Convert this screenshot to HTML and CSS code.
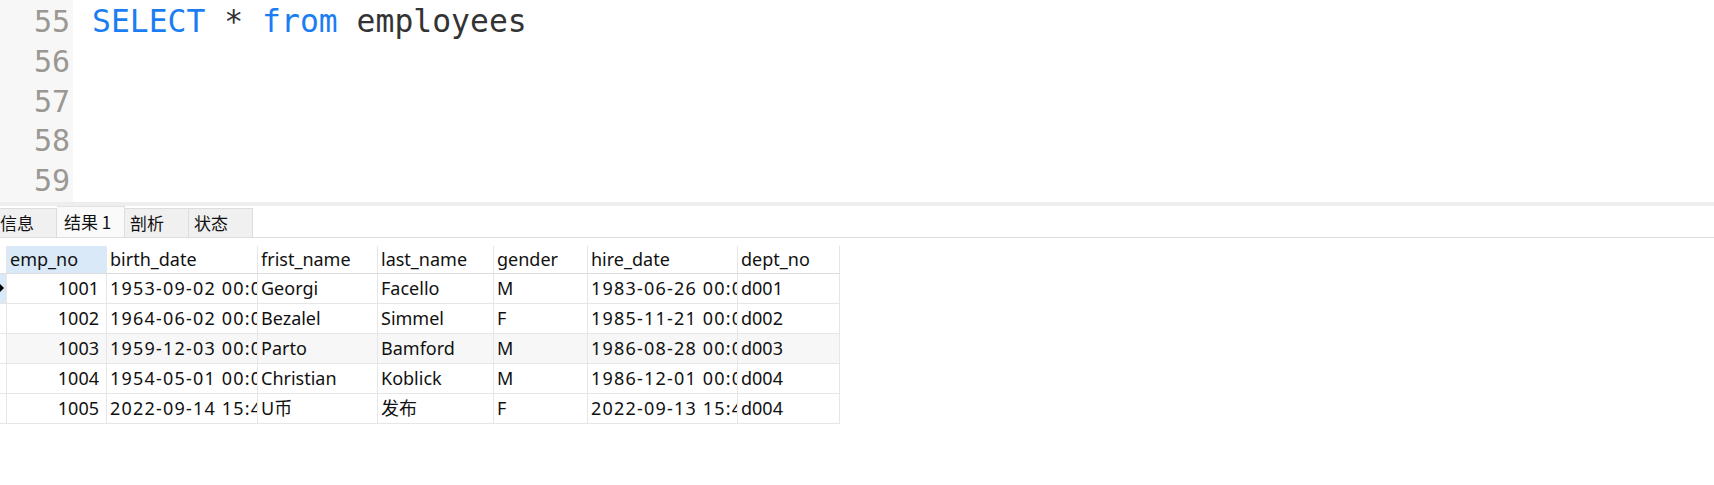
FILE: index.html
```html
<!DOCTYPE html>
<html lang="zh-CN">
<head>
<meta charset="utf-8">
<title>Query</title>
<link rel="stylesheet" href="styles.css">
</head>
<body>
<div class="editor">
  <div class="gutter">
    <div class="ln">55</div>
    <div class="ln">56</div>
    <div class="ln">57</div>
    <div class="ln">58</div>
    <div class="ln">59</div>
  </div>
  <div class="code">
    <div class="line"><span class="kw">SELECT</span> * <span class="kw">from</span> employees</div>
    <div class="line"></div>
    <div class="line"></div>
    <div class="line"></div>
    <div class="line"></div>
  </div>
</div>
<div class="splitter"></div>
<div class="tabbar">
  <div class="tab tab-first">信息</div>
  <div class="tab tab-active">结果 1</div>
  <div class="tab">剖析</div>
  <div class="tab">状态</div>
</div>
<div class="grid">
  <div class="row head">
    <div class="cell ind"></div>
    <div class="cell sel">emp_no</div>
    <div class="cell">birth_date</div>
    <div class="cell">frist_name</div>
    <div class="cell">last_name</div>
    <div class="cell">gender</div>
    <div class="cell">hire_date</div>
    <div class="cell">dept_no</div>
  </div>
  <div class="row">
    <div class="cell ind ind-cur"><span class="arrow"></span></div>
    <div class="cell num">1001</div>
    <div class="cell dt">1953-09-02 00:00:00</div>
    <div class="cell">Georgi</div>
    <div class="cell">Facello</div>
    <div class="cell">M</div>
    <div class="cell dt">1983-06-26 00:00:00</div>
    <div class="cell">d001</div>
  </div>
  <div class="row">
    <div class="cell ind"></div>
    <div class="cell num">1002</div>
    <div class="cell dt">1964-06-02 00:00:00</div>
    <div class="cell">Bezalel</div>
    <div class="cell">Simmel</div>
    <div class="cell">F</div>
    <div class="cell dt">1985-11-21 00:00:00</div>
    <div class="cell">d002</div>
  </div>
  <div class="row alt">
    <div class="cell ind"></div>
    <div class="cell num">1003</div>
    <div class="cell dt">1959-12-03 00:00:00</div>
    <div class="cell">Parto</div>
    <div class="cell">Bamford</div>
    <div class="cell">M</div>
    <div class="cell dt">1986-08-28 00:00:00</div>
    <div class="cell">d003</div>
  </div>
  <div class="row">
    <div class="cell ind"></div>
    <div class="cell num">1004</div>
    <div class="cell dt">1954-05-01 00:00:00</div>
    <div class="cell">Christian</div>
    <div class="cell">Koblick</div>
    <div class="cell">M</div>
    <div class="cell dt">1986-12-01 00:00:00</div>
    <div class="cell">d004</div>
  </div>
  <div class="row">
    <div class="cell ind"></div>
    <div class="cell num">1005</div>
    <div class="cell dt">2022-09-14 15:40:00</div>
    <div class="cell">U币</div>
    <div class="cell">发布</div>
    <div class="cell">F</div>
    <div class="cell dt">2022-09-13 15:40:00</div>
    <div class="cell">d004</div>
  </div>
</div>
</body>
</html>
```
FILE: styles.css
```css
html, body {
  margin: 0;
  padding: 0;
  background: #ffffff;
}
body {
  width: 1714px;
  height: 485px;
  overflow: hidden;
  font-family: "Noto Sans", "Noto Sans CJK SC", sans-serif;
}
.editor {
  display: flex;
  height: 202px;
  overflow: hidden;
}
.gutter {
  width: 73px;
  background: #f7f7f7;
  padding-top: 2px;
  box-sizing: border-box;
}
.ln {
  height: 39.75px;
  line-height: 39.75px;
  text-align: right;
  padding-right: 3px;
  font-family: "DejaVu Sans Mono", monospace;
  font-size: 30px;
  color: #9b9893;
}
.code {
  flex: 1;
  padding-left: 19px;
  padding-top: 2px;
}
.line {
  height: 39.75px;
  line-height: 39.75px;
  font-family: "DejaVu Sans Mono", monospace;
  font-size: 31.4px;
  color: #333333;
  white-space: pre;
}
.kw {
  color: #1a7ef2;
}
.splitter {
  height: 4px;
  background: #eeeeee;
}
.tabbar {
  display: flex;
  align-items: flex-end;
  height: 32px;
  box-sizing: border-box;
  border-bottom: 1px solid #dedede;
  font-family: "Noto Sans CJK SC", sans-serif;
  font-size: 17px;
  color: #111111;
}
.tab {
  height: 29px;
  line-height: 27px;
  box-sizing: border-box;
  width: 64px;
  padding-left: 5px;
  background: #f0f0f0;
  border: 1px solid #dddddd;
  border-bottom: none;
  border-left: none;
  white-space: nowrap;
}
.tab-first {
  width: 57px;
  padding-left: 0;
  border-left: none;
}
.tab-active {
  width: 68px;
  height: 31px;
  line-height: 29px;
  padding-left: 7px;
  background: #fafafa;
  border-left: none;
  border-top: 1px solid #e2e2e2;
}
.grid {
  margin-top: 8px;
  font-family: "Noto Sans", "Noto Sans CJK SC", sans-serif;
  font-size: 18px;
  color: #111111;
}
.row {
  display: grid;
  grid-template-columns: 7px 100px 151px 120px 116px 94px 150px 102px;
  width: 840px;
  height: 30px;
}
.row.head {
  height: 28px;
}
.row.alt .cell {
  background: #f7f7f7;
}
.row.alt .cell.ind {
  background: #ffffff;
}
.cell {
  box-sizing: border-box;
  border-right: 1px solid #e6e6e6;
  border-bottom: 1px solid #e6e6e6;
  padding-left: 3px;
  overflow: hidden;
  white-space: nowrap;
  line-height: 28px;
}
.cell.dt {
  letter-spacing: 1.2px;
}
.head .cell {
  line-height: 26px;
  border-bottom-color: #dcdcdc;
}
.cell.sel {
  background: #d9e9f8;
}
.cell.ind {
  padding: 0;
  position: relative;
}
.cell.ind-cur {
  background: #d9e9f8;
}
.arrow {
  position: absolute;
  left: 0;
  top: 10px;
  width: 0;
  height: 0;
  border-left: 4px solid #000000;
  border-top: 4px solid transparent;
  border-bottom: 4px solid transparent;
}
.cell.num {
  text-align: right;
  padding-left: 0;
  padding-right: 7px;
}
```
